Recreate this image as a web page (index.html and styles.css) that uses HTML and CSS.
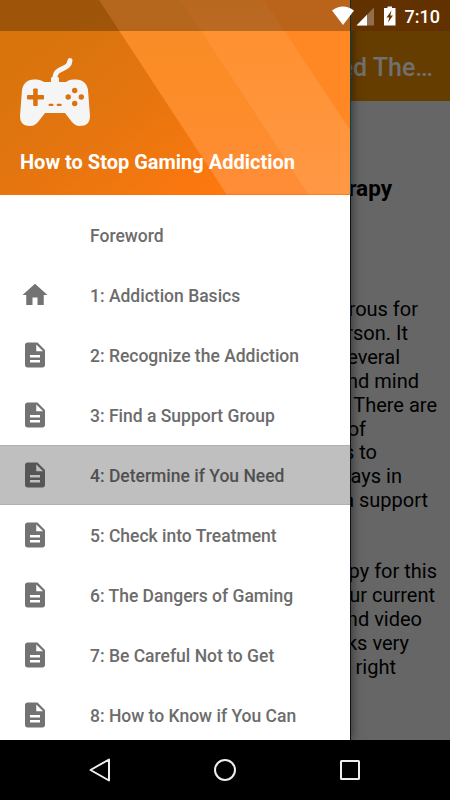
FILE: index.html
```html
<!DOCTYPE html>
<html lang="en">

<head>
    <meta charset="UTF-8">
    <meta name="viewport" content="width=device-width, initial-scale=1.0">
    <title>How to Stop Gaming Addiction</title>
    <link rel="stylesheet" href="styles.css">
</head>

<body>
    <!-- shared icons -->
    <svg class="sprite">
        <symbol id="doc" viewBox="0 0 24 24">
            <path d="M14 2H6c-1.100 0-1.990.9-1.990 2L4 20c0 1.100.89 2 1.990 2H18c1.100 0 2-.9 2-2V8l-6-6zm2 16H8v-2h8v2zm0-4H8v-2h8v2zm-3-5V3.500L18.500 9H13z"/>
        </symbol>
        <symbol id="home" viewBox="0 0 24 24">
            <path d="M10 20v-6h4v6h5v-8h3L12 3 2 12h3v8z"/>
        </symbol>
    </svg>

    <div class="screen">
        <div class="page">
            <div class="toolbar">ed The…</div>
            <div class="article">
                <h2>rapy</h2>
                <div class="para first">
                    <span>rous for</span>
                    <span>rson. It</span>
                    <span>everal</span>
                    <span>nd mind</span>
                    <span>There are</span>
                    <span>of</span>
                    <span>s to</span>
                    <span>ays in</span>
                    <span>a support</span>
                </div>
                <div class="para second">
                    <span>py for this</span>
                    <span>ur current</span>
                    <span>nd video</span>
                    <span>ks very</span>
                    <span>right</span>
                </div>
            </div>
        </div>

        <div class="drawer">
            <div class="header">
                <svg class="header-bg" viewBox="0 0 350 195" preserveAspectRatio="none">
                    <defs>
                        <linearGradient id="base" gradientUnits="userSpaceOnUse" x1="40" y1="50" x2="175" y2="230">
                            <stop offset="0" stop-color="#d9740d"/>
                            <stop offset="0.4" stop-color="#e4750f"/>
                            <stop offset="1" stop-color="#ff780f"/>
                        </linearGradient>
                        <linearGradient id="band" x1="0" y1="0" x2="0" y2="1">
                            <stop offset="0" stop-color="#f78d28"/>
                            <stop offset="0.4" stop-color="#fc8c26"/>
                            <stop offset="1" stop-color="#ff8d38"/>
                        </linearGradient>
                        <linearGradient id="band2" x1="0" y1="0" x2="0" y2="1">
                            <stop offset="0" stop-color="#ff8f2c"/>
                            <stop offset="1" stop-color="#ff9845"/>
                        </linearGradient>
                    </defs>
                    <rect width="350" height="195" fill="url(#base)"/>
                    <path d="M99 0H350V195H227z" fill="url(#band)"/>
                    <path d="M181 0H350V195H309z" fill="url(#band2)"/>
                    <path d="M264 0H350V130z" fill="#ff8824"/>
                    <rect y="194" width="350" height="1" fill="#ff6d00" opacity=".6"/>
                </svg>
                <svg class="gamepad" viewBox="0 0 70 68">
                    <path d="M35 22C34 7 49 14 50 2.500" fill="none" stroke="#f5f5f5" stroke-width="5" stroke-linecap="round"/>
                    <path d="M31 24v-3.500q0-1.500 1.500-1.500h5q1.500 0 1.500 1.500V24l7 0C49 21.500 53 21.500 56 21.500C63 21.500 67 26 68 32L70 58C70 65 66 68 60 68C56 68 54 66 52 64L45 55H25L18 64C16 66 14 68 10 68C4 68 0 65 0 58L2 32C3 26 7 21.500 14 21.500C18 21.500 21 22 24 24z" fill="#f5f5f5"/>
                    <g fill="#dc720d">
                        <rect x="7" y="37" width="17" height="4.500" rx=".8"/>
                        <rect x="13.200" y="30.500" width="4.500" height="17.500" rx=".8"/>
                        <circle cx="54.700" cy="32.500" r="2.700"/>
                        <circle cx="54.700" cy="45.500" r="2.700"/>
                        <circle cx="48.200" cy="39" r="2.700"/>
                        <circle cx="61.300" cy="39" r="2.700"/>
                        <rect x="28.500" y="45.700" width="5" height="2.300" rx="1"/>
                        <rect x="36.700" y="45.700" width="5" height="2.300" rx="1"/>
                    </g>
                </svg>
                <div class="app-name">How to Stop Gaming Addiction</div>
            </div>
            <div class="menu">
                <div class="item"><span class="icon"></span><span class="label">Foreword</span></div>
                <div class="item"><svg class="icon"><use href="#home"/></svg><span class="label">1: Addiction Basics</span></div>
                <div class="item"><svg class="icon"><use href="#doc"/></svg><span class="label">2: Recognize the Addiction</span></div>
                <div class="item"><svg class="icon"><use href="#doc"/></svg><span class="label">3: Find a Support Group</span></div>
                <div class="item active"><svg class="icon"><use href="#doc"/></svg><span class="label">4: Determine if You Need</span></div>
                <div class="item"><svg class="icon"><use href="#doc"/></svg><span class="label">5: Check into Treatment</span></div>
                <div class="item"><svg class="icon"><use href="#doc"/></svg><span class="label">6: The Dangers of Gaming</span></div>
                <div class="item"><svg class="icon"><use href="#doc"/></svg><span class="label">7: Be Careful Not to Get</span></div>
                <div class="item"><svg class="icon"><use href="#doc"/></svg><span class="label">8: How to Know if You Can</span></div>
            </div>
        </div>

        <div class="status">
            <svg class="status-icons" viewBox="0 0 66 20">
                <path d="M0 4.500Q11 -3.500 22 4.500L11 19z" fill="#fff"/>
                <path d="M42 1.500V19.500H24.500z" fill="#fff" opacity=".3"/>
                <path d="M35 8.700V19.500H24.500z" fill="#fff"/>
                <path d="M55.500 2V.500h4.500V2h3.500V19.500H52V2z" fill="#fff"/>
                <path d="M59.500 4.500L54.500 11.500h2.700L56 16.500L61 9.500h-2.700z" fill="#663300"/>
            </svg>
            <span class="clock">7:10</span>
        </div>
    </div>

    <div class="navbar">
        <svg viewBox="0 0 26 26"><path d="M22 2.500V23.500L3.500 13z"/></svg>
        <svg viewBox="0 0 26 26"><circle cx="13" cy="13" r="10"/></svg>
        <svg viewBox="0 0 26 26"><rect x="4" y="4" width="18" height="18" rx=".5"/></svg>
    </div>
</body>

</html>
```

FILE: styles.css
```css
* {
    margin: 0;
    padding: 0;
    box-sizing: border-box;
}

body {
    width: 450px;
    height: 800px;
    overflow: hidden;
    background-color: #000;
    font-family: Roboto, "Liberation Sans", sans-serif;
}

.sprite {
    display: none;
}

.screen {
    position: relative;
    height: 740px;
    overflow: hidden;
}

/* dimmed page behind the drawer */
.page {
    height: 740px;
    background-color: #666;
}

.toolbar {
    height: 101px;
    padding: 31px 17px 0 0;
    background-color: #663d00;
    color: #707070;
    font-size: 25px;
    font-weight: 500;
    line-height: 74px;
    text-align: right;
}

.article {
    display: flex;
    flex-direction: column;
    color: #000;
}

.article h2 {
    margin-top: 73px;
    padding-right: 58px;
    font-size: 22.5px;
    font-weight: 700;
    line-height: 28px;
    text-align: right;
}

.para {
    display: flex;
    flex-direction: column;
    align-items: flex-end;
    font-size: 20px;
    line-height: 23.9px;
    white-space: nowrap;
}

.first {
    margin-top: 96px;
}

.second {
    margin-top: 47px;
}

/* line ends of the wrapped text */
.first span:nth-child(1) { margin-right: 32px; }
.first span:nth-child(2) { margin-right: 42px; }
.first span:nth-child(3) { margin-right: 50px; }
.first span:nth-child(4) { margin-right: 31px; }
.first span:nth-child(5) { margin-right: 13px; }
.first span:nth-child(6) { margin-right: 84px; }
.first span:nth-child(7) { margin-right: 73px; }
.first span:nth-child(8) { margin-right: 48px; }
.first span:nth-child(9) { margin-right: 22px; }
.second span:nth-child(1) { margin-right: 13px; }
.second span:nth-child(2) { margin-right: 15px; }
.second span:nth-child(3) { margin-right: 28px; }
.second span:nth-child(4) { margin-right: 41px; }
.second span:nth-child(5) { margin-right: 54px; }

.drawer {
    position: absolute;
    top: 0;
    left: 0;
    width: 350px;
    height: 740px;
    background-color: #fff;
    box-shadow: 1px 0 0 #111, 2px 0 10px rgba(0, 0, 0, 0.5);
}

.header {
    position: relative;
    height: 195px;
    padding: 58px 20px 0;
    box-shadow: 1px 0 0 #044650;
}

.header-bg {
    position: absolute;
    top: 0;
    left: 0;
    width: 350px;
    height: 195px;
}

.gamepad {
    position: relative;
    display: block;
    width: 70px;
    height: 68px;
}

.app-name {
    position: relative;
    margin-top: 24px;
    color: #fff;
    font-size: 20px;
    font-weight: 700;
    line-height: 24px;
    white-space: nowrap;
}

.menu {
    padding-top: 10px;
}

.item {
    display: flex;
    align-items: center;
    height: 60px;
    padding-left: 20px;
    color: #6c6c6c;
    font-size: 17.5px;
    font-weight: 500;
    white-space: nowrap;
}

.icon {
    width: 30px;
    height: 30px;
    margin-right: 40px;
    fill: #737373;
}

.label {
    padding-top: 2px;
}

.active {
    background-color: #bfbfbf;
    border-top: 1px solid #b0b0b0;
    border-bottom: 1px solid #b0b0b0;
    color: #505050;
}

.active .icon {
    fill: #565656;
}

.status {
    position: absolute;
    top: 0;
    left: 0;
    display: flex;
    align-items: center;
    justify-content: flex-end;
    width: 450px;
    height: 31px;
    padding-right: 10px;
    background: linear-gradient(to right, rgba(0, 0, 0, 0.27) 351px, #613100 351px);
    color: #fff;
}

.status-icons {
    width: 66px;
    height: 20px;
    margin-right: 7px;
}

.clock {
    padding-top: 1px;
    font-size: 18px;
    font-weight: 500;
}

.navbar {
    display: flex;
    align-items: center;
    justify-content: space-between;
    height: 60px;
    padding: 0 87px;
}

.navbar svg {
    width: 26px;
    height: 26px;
    fill: none;
    stroke: #eee;
    stroke-width: 2;
    stroke-linejoin: round;
}
```
